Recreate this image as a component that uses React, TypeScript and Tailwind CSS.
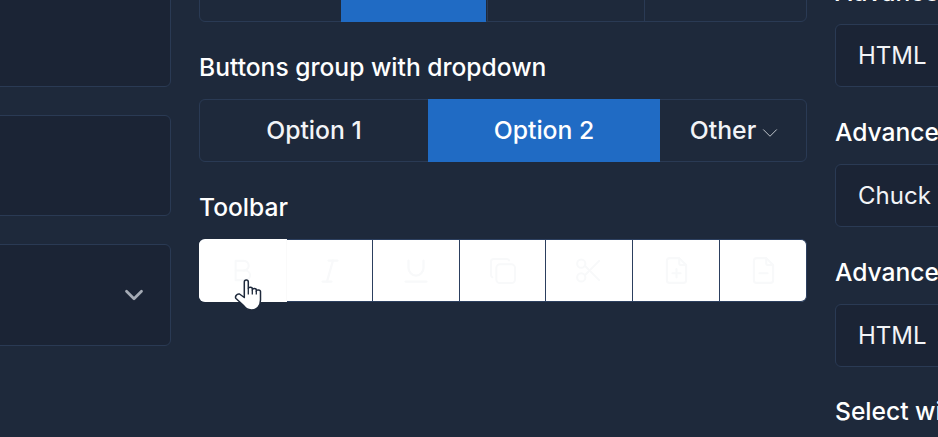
import React from "react";
import { ChevronDown } from "lucide-react";
import { TbBold, TbItalic, TbUnderline, TbCopy, TbScissors, TbFilePlus, TbFileMinus } from "react-icons/tb";

const label = "text-[24.6px] leading-[30px] font-medium text-white";

function Field({ text, cls }: { text: string; cls: string }) {
  return (
    <div className={`flex h-[63px] w-[300px] items-center rounded-[6px] border border-[#2a3a54] bg-[#1b2435] pl-[22px] text-[24px] text-[#f2f4f7] ${cls}`}>
      {text}
    </div>
  );
}

function Tool({ icon: Icon, w, divider = true, size = 33 }: { icon: typeof TbBold; w: string; divider?: boolean; size?: number }) {
  return (
    <div className={`flex h-full ${w} items-center justify-center ${divider ? "border-l border-[#2c3f5f]" : ""}`}>
      <Icon size={size} strokeWidth={1.5} className="text-[#f8f9fa]" />
    </div>
  );
}

export default function App() {
  return (
    <div className="flex h-[437px] w-[938px] gap-[28px] overflow-hidden bg-[#1e293b]" style={{ fontFamily: "Inter, 'Liberation Sans', sans-serif" }}>
      {/* Left column */}
      <div className="ml-[-60px] flex w-[231px] shrink-0 flex-col gap-[28px]">
        <div className="mt-[-20px] h-[107px] rounded-[6px] border border-[#2a3a54] bg-[#1b2435]" />
        <div className="h-[101px] rounded-[6px] border border-[#2a3a54] bg-[#1b2435]" />
        <div className="flex h-[102px] items-center justify-end rounded-[6px] border border-[#2a3a54] bg-[#1b2435] pr-[21px]">
          <ChevronDown size={30} strokeWidth={2.2} className="text-[#a5abb5]" />
        </div>
      </div>

      {/* Middle column */}
      <div className="flex w-[608px] shrink-0 flex-col">
        <div className="mt-[-41px] flex h-[63px] rounded-[6px] border border-[#2a3a54]">
          <div className="w-[141px]" />
          <div className="my-[-1px] w-[145px] bg-[#206bc4]" />
          <div className="ml-[1px] w-[157px] border-l border-[#2a3a54]" />
          <div className="flex-1 border-l border-[#2a3a54]" />
        </div>
        <div className={`mt-[30px] ${label}`}>Buttons group with dropdown</div>
        <div className="mt-[17px] flex h-[63px] rounded-[6px] border border-[#2a3a54] text-[24.75px] font-medium text-[#f2f4f7]">
          <div className="flex w-[228px] items-center justify-center">Option 1</div>
          <div className="my-[-1px] flex w-[232px] items-center justify-center bg-[#206bc4] text-white">Option 2</div>
          <div className="flex flex-1 items-center justify-center">
            Other
            <ChevronDown size={26} strokeWidth={0.9} className="ml-[1px] mt-[5px] mr-[-7px] text-[#c3c8cf]" />
          </div>
        </div>
        <div className={`mt-[30px] ${label}`}>Toolbar</div>
        <div className="relative mt-[17px] flex h-[63px] rounded-[6px] border-y border-r border-[#2c3f5f] bg-white">
          <div className="relative z-10 my-[-1px] flex w-[88px] items-center justify-center rounded-l-[6px] border-r border-[#fafafa] bg-white">
            <TbBold size={33} strokeWidth={1.5} className="text-[#f8f9fa]" />
          </div>
          <Tool icon={TbItalic} w="w-[85px]" divider={false} size={36} />
          <Tool icon={TbUnderline} w="w-[87px]" size={36} />
          <Tool icon={TbCopy} w="w-[86px]" size={32} />
          <Tool icon={TbScissors} w="w-[87px]" />
          <Tool icon={TbFilePlus} w="w-[87px]" />
          <Tool icon={TbFileMinus} w="flex-1" />
          <svg className="absolute left-[36px] top-[39px] z-20 overflow-visible" width="27" height="32" viewBox="0 0 27 32">
            <path d="M9.300 3C9.300 .3 13.300 .3 13.300 3V9.500C13.300 7.800 17.300 7.800 17.300 9.800V11C17.300 9 21.300 9 21.300 11V12.200C21.300 10.400 25.500 10.400 25.500 12.600V21C25.500 27 22 31 16.500 31C12 31 10.500 29 8 26L1 19.500C-.3 18 1.500 14.500 4.500 15L9.300 18.500Z" fill="#fff" stroke="#1e293b" strokeWidth="1.500" strokeLinejoin="round" />
            <path d="M13.300 9.500V15.500M17.300 11V15.500M21.300 12V15.500" stroke="#1e293b" strokeWidth="1.300" fill="none" />
          </svg>
        </div>
      </div>

      {/* Right column */}
      <div className="flex w-[300px] shrink-0 flex-col">
        <div className={`mt-[-23px] ${label}`}>Advanced select</div>
        <Field text="HTML" cls="mt-[17px]" />
        <div className={`mt-[30px] ${label}`}>Advanced select</div>
        <Field text="Chuck Tesla" cls="mt-[17px]" />
        <div className={`mt-[30px] ${label}`}>Advanced select</div>
        <Field text="HTML" cls="mt-[17px]" />
        <div className={`mt-[29px] ${label}`}>Select with avatars</div>
      </div>
    </div>
  );
}
